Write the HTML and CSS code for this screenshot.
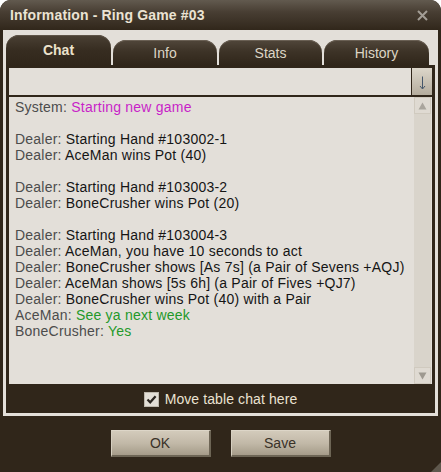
FILE: index.html
```html
<!DOCTYPE html>
<html>
<head>
<meta charset="utf-8">
<link rel="stylesheet" href="styles.css">
</head>
<body>
<div class="window">
  <div class="titlebar">
    <span class="title">Information - Ring Game #03</span>
    <svg class="close" width="11" height="11" viewBox="0 0 11 11"><path d="M1 1L10 10M10 1L1 10" stroke="#a39d95" stroke-width="2" fill="none"/></svg>
  </div>
  <div class="panel">
    <div class="tabs">
      <div class="tab active">Chat</div>
      <div class="tab w104">Info</div>
      <div class="tab w103">Stats</div>
      <div class="tab">History</div>
    </div>
    <div class="pane">
      <div class="inputrow">
        <div class="input"></div>
        <div class="sendbtn">
          <svg width="7" height="14" viewBox="0 0 7 14"><path d="M3.5 0.5V12.5M1 10L3.5 13L6 10" stroke="#45566a" stroke-width="1" fill="none"/></svg>
        </div>
      </div>
      <div class="chat">
        <div class="log">
          <div class="line"><span class="who">System:</span> <span class="sys">Starting new game</span></div>
          <div class="line blank"></div>
          <div class="line"><span class="who">Dealer:</span> Starting Hand #103002-1</div>
          <div class="line"><span class="who">Dealer:</span> AceMan wins Pot (40)</div>
          <div class="line blank"></div>
          <div class="line"><span class="who">Dealer:</span> Starting Hand #103003-2</div>
          <div class="line"><span class="who">Dealer:</span> BoneCrusher wins Pot (20)</div>
          <div class="line blank"></div>
          <div class="line"><span class="who">Dealer:</span> Starting Hand #103004-3</div>
          <div class="line"><span class="who">Dealer:</span> AceMan, you have 10 seconds to act</div>
          <div class="line"><span class="who">Dealer:</span> BoneCrusher shows [As 7s] (a Pair of Sevens +AQJ)</div>
          <div class="line"><span class="who">Dealer:</span> AceMan shows [5s 6h] (a Pair of Fives +QJ7)</div>
          <div class="line"><span class="who">Dealer:</span> BoneCrusher wins Pot (40) with a Pair</div>
          <div class="line"><span class="who">AceMan:</span> <span class="player">See ya next week</span></div>
          <div class="line"><span class="who">BoneCrusher:</span> <span class="player">Yes</span></div>
        </div>
        <div class="scrollbar">
          <div class="sb-btn"><svg width="9" height="8" viewBox="0 0 9 8"><path d="M4.5 0.5L8.5 7.5H0.5Z" fill="#aaa59d"/></svg></div>
          <div class="sb-track"></div>
          <div class="sb-btn"><svg width="9" height="8" viewBox="0 0 9 8"><path d="M0.5 0.5H8.5L4.5 7.5Z" fill="#9e9990"/></svg></div>
        </div>
      </div>
      <label class="movechat">
        <span class="checkbox"><svg width="11" height="11" viewBox="0 0 11 11"><path d="M1.5 5.5L4.2 8.3L9.6 2.2" stroke="#2a2520" stroke-width="2.2" fill="none"/></svg></span>
        <span>Move table chat here</span>
      </label>
    </div>
  </div>
  <div class="buttons">
    <div class="btn">OK</div>
    <div class="btn">Save</div>
  </div>
  <svg class="grip" width="10" height="10" viewBox="0 0 10 10"><path d="M10 0V10H0Z" fill="#5f584d"/></svg>
</div>
</body>
</html>
```

FILE: styles.css
```css
* { box-sizing: border-box; }
html, body { margin: 0; padding: 0; background: #ffffff; }
body { font-family: "Liberation Sans", Arial, sans-serif; font-size: 14px; }

.window {
  position: relative;
  width: 441px;
  height: 472px;
  background: #30261a;
  border-radius: 11px 11px 0 0;
  display: flex;
  flex-direction: column;
  overflow: hidden;
}

.titlebar {
  height: 30px;
  flex: none;
  display: flex;
  align-items: center;
  justify-content: space-between;
  padding: 0 13px 0 10px;
  background: linear-gradient(#625a4f 0%, #483e33 40%, #31271b 100%);
}
.title {
  font-weight: bold;
  color: #ebe3d3;
  line-height: 30px;
  letter-spacing: 0.15px;
}
.close { display: block; }

.panel {
  margin: 0 3px;
  height: 386px;
  flex: none;
  background: #e3dfd9;
  padding: 5px 3px 3px;
  display: flex;
  flex-direction: column;
}

.tabs {
  height: 30px;
  flex: none;
  display: flex;
  align-items: flex-end;
  gap: 2px;
}
.tab {
  width: 105px;
  height: 25px;
  border-radius: 13px 13px 0 0;
  background: linear-gradient(#51473b 0%, #3d3327 45%, #30261a 100%);
  box-shadow: inset 0 1px 0 #6a6054;
  color: #ddd5c5;
  text-align: center;
  padding-top: 2px;
  line-height: 23px;
}
.tab.w104 { width: 104px; }
.tab.w103 { width: 103px; }
.tab.active {
  height: 30px;
  padding-top: 0;
  line-height: 31px;
  font-weight: bold;
  color: #ece2cc;
  background: linear-gradient(#4a4034 0%, #372d21 50%, #30261a 100%);
  box-shadow: inset 0 1px 0 #5e5448;
}

.pane {
  flex: 1;
  background: #30261a;
  padding: 3px 3px 0;
  display: flex;
  flex-direction: column;
}

.inputrow {
  height: 27px;
  flex: none;
  display: flex;
  gap: 1px;
}
.input { flex: 1; background: #e3dfd9; }
.sendbtn {
  width: 20px;
  background: linear-gradient(#dcd6ca, #b5ad9e);
  display: flex;
  align-items: center;
  justify-content: center;
  padding-top: 3px;
}
.sendbtn svg { display: block; }

.chat {
  margin-top: 2px;
  height: 287px;
  flex: none;
  background: #e3dfd9;
  display: flex;
}
.log {
  flex: 1;
  padding: 2px 0 0 6px;
  color: #151515;
  line-height: 16px;
  letter-spacing: 0.22px;
}
.line { height: 16px; white-space: nowrap; }
.who { color: #4c4c4c; }
.sys { color: #c81fc8; }
.player { color: #23992a; }

.scrollbar {
  width: 17px;
  margin-right: 1px;
  background: #d9d4cb;
  display: flex;
  flex-direction: column;
}
.sb-btn {
  height: 17px;
  background: #dfdad2;
  border: 1px solid #d0cabf;
  display: flex;
  align-items: center;
  justify-content: center;
}
.sb-btn svg { display: block; }
.sb-track { flex: 1; }

.movechat {
  flex: 1;
  display: flex;
  align-items: center;
  justify-content: center;
  gap: 6px;
  color: #ebe3d2;
  padding-top: 1px;
  letter-spacing: 0.1px;
}
.checkbox {
  width: 15px;
  height: 15px;
  background: #e2ded6;
  border: 1px solid #bdb7ac;
  display: flex;
  align-items: center;
  justify-content: center;
}
.checkbox svg { display: block; }

.buttons {
  flex: 1;
  display: flex;
  justify-content: center;
  gap: 20px;
  padding-top: 14px;
}
.btn {
  width: 100px;
  height: 27px;
  background: linear-gradient(#d3cbbb 0%, #c2b9a8 50%, #a59b89 100%);
  border-top: 1px solid #ddd6c8;
  border-left: 1px solid #d6cfc0;
  border-right: 2px solid #6d6555;
  border-bottom: 2px solid #6d6555;
  color: #3a3228;
  text-align: center;
  line-height: 24px;
}

.grip {
  position: absolute;
  right: 0;
  bottom: 0;
  display: block;
}
```
